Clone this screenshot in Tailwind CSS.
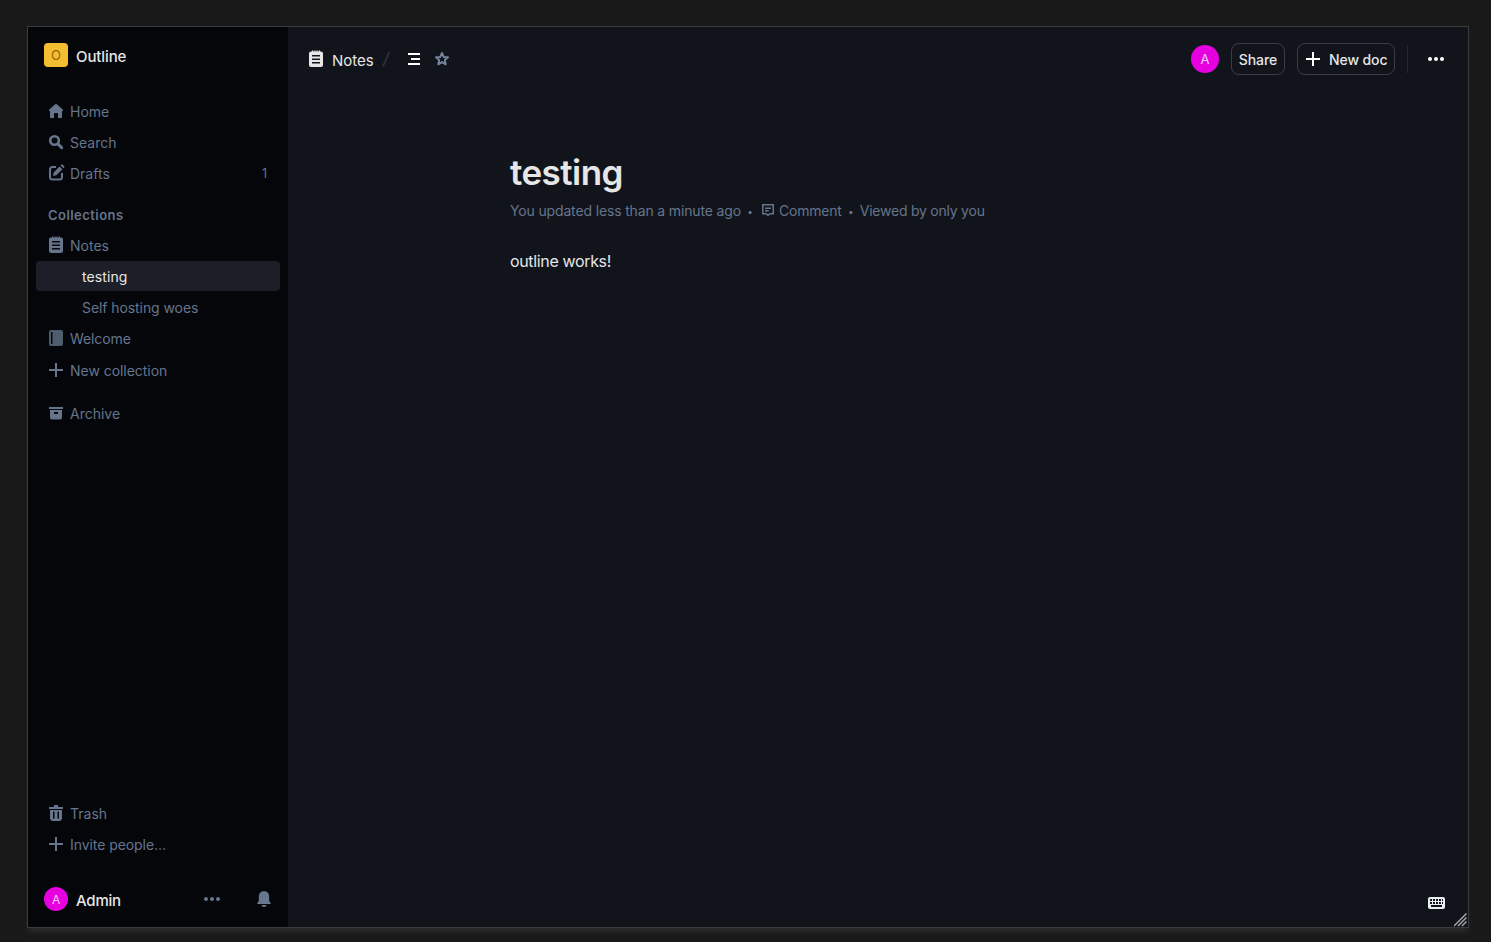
<!DOCTYPE html>
<html lang="en">
<head>
  <meta charset="UTF-8">
  <title>testing - Outline</title>
  <script src="https://cdn.jsdelivr.net/npm/@tailwindcss/browser@4"></script>
</head>
<body class="bg-[#19191a] h-screen overflow-hidden pl-[27px] pt-[26px] font-['Inter',sans-serif]">
  <div class="relative flex w-[1442px] h-[902px] border border-[#3a3b3d] bg-[#11141b] shadow-[0_5px_5px_-1px_#2a2a2b]">

    <!-- Sidebar -->
    <aside class="flex flex-col w-[260px] shrink-0 bg-[#04060a] text-[#66758c] text-[14px]">
      <div class="flex items-center gap-2 pl-4 pt-4 h-10 text-[#e6e6e6] text-[15px] tracking-[-0.1px] font-medium">
        <div class="size-6 rounded bg-[#f5be31] text-[#8d6a12] text-[13px] font-normal flex items-center justify-center pt-px">O</div>
        <span class="pt-1">Outline</span>
      </div>

      <nav class="flex flex-col gap-px px-2 mt-[29px]">
        <a class="flex items-center gap-0.5 h-[30px] px-2">
          <svg class="size-6" viewBox="0 0 24 24" fill="currentColor"><path d="M11.200 5.300a1.200 1.200 0 0 1 1.600 0l6 5.200c.6.600.3 1.500-.5 1.500H18v6a1 1 0 0 1-1 1h-3v-4a1 1 0 0 0-1-1h-2a1 1 0 0 0-1 1v4H7a1 1 0 0 1-1-1v-6h-.3c-.8 0-1.100-.9-.5-1.500z"/></svg>
          <span class="pt-px">Home</span>
        </a>
        <a class="flex items-center gap-0.5 h-[30px] px-2">
          <svg class="size-6" viewBox="0 0 24 24" fill="none" stroke="currentColor" stroke-linecap="round"><circle cx="10.500" cy="10.500" r="4.300" stroke-width="2.600"/><path d="M14.400 14.400l3.200 3.200" stroke-width="3"/></svg>
          <span class="pt-px">Search</span>
        </a>
        <a class="flex items-center gap-0.5 h-[30px] px-2">
          <svg class="size-6" viewBox="0 0 24 24" fill="currentColor"><path d="M12 6H8.500A2.500 2.500 0 0 0 6 8.500V16a2.500 2.500 0 0 0 2.500 2.500h7A2.500 2.500 0 0 0 18 16v-4" fill="none" stroke="currentColor" stroke-width="2"/><path d="M15.600 5.400l2.800 2.800-6 6-3.400.8.700-3.600zM16.600 4.400l.8-.8a.8.8 0 0 1 1.100 0l1.700 1.700a.8.8 0 0 1 0 1.100l-.8.8z"/></svg>
          <span class="pt-px">Drafts</span>
          <span class="ml-auto mr-[5px] pt-0.5 text-[12.5px]">1</span>
        </a>
      </nav>

      <div class="px-5 mt-[18px] h-[18px] leading-[19px] text-[13px] font-semibold tracking-[0.45px]">Collections</div>

      <nav class="flex flex-col gap-px px-2 mt-[6px]">
        <a class="flex items-center gap-0.5 h-[30px] px-2">
          <svg class="size-6" viewBox="0 0 24 24" fill="currentColor" fill-rule="evenodd"><path d="M7 4.500h1V3.500h1.300v1h1v-1h1.200v1h1v-1h1.200v1h1v-1H16v1h1a2 2 0 0 1 2 2V18a2 2 0 0 1-2 2H7a2 2 0 0 1-2-2V6.500a2 2 0 0 1 2-2zm1 3.500v1.500h8V8zm0 3.500V13h8v-1.500zM8 15v1.500h8V15z"/></svg>
          <span class="pt-px">Notes</span>
        </a>
        <a class="flex items-center h-[30px] pl-[46px] rounded bg-[#1c1e28] text-[#e6e6e6]"><span class="pt-px tracking-[0.1px]">testing</span></a>
        <a class="flex items-center h-[30px] pl-[46px]"><span class="pt-px tracking-[-0.08px]">Self hosting woes</span></a>
        <a class="flex items-center gap-0.5 h-[30px] px-2">
          <svg class="size-6 text-[#4e5c6e]" viewBox="0 0 24 24" fill="currentColor" fill-rule="evenodd"><path d="M7 4h10a2 2 0 0 1 2 2v12a2 2 0 0 1-2 2H7a2 2 0 0 1-2-2V6a2 2 0 0 1 2-2zm0 2v12h1.500V6z"/></svg>
          <span class="pt-px tracking-[-0.1px]">Welcome</span>
        </a>
        <a class="flex items-center gap-0.5 h-[30px] px-2 mt-px">
          <svg class="size-6" viewBox="0 0 24 24" fill="currentColor"><path d="M11 5h2v6h6v2h-6v6h-2v-6H5v-2h6z"/></svg>
          <span class="pt-px tracking-[-0.04px]">New collection</span>
        </a>
        <a class="flex items-center gap-0.5 h-[30px] px-2 mt-3">
          <svg class="size-6" viewBox="0 0 24 24" fill="currentColor" fill-rule="evenodd"><path d="M5 6h14v2H5zM6 9h12v7.500a2 2 0 0 1-2 2H8a2 2 0 0 1-2-2zm4 2v2h4v-2z"/></svg>
          <span class="pt-px">Archive</span>
        </a>
      </nav>

      <nav class="flex flex-col gap-px px-2 mt-auto">
        <a class="flex items-center gap-0.5 h-[30px] px-2">
          <svg class="size-6" viewBox="0 0 24 24" fill="currentColor" fill-rule="evenodd"><path d="M10 4h4v2h5v2H5V6h5zM6 9h12v8a3 3 0 0 1-3 3H9a3 3 0 0 1-3-3zm3 1.500v7h1.500v-7zm4.500 0v7H15v-7z"/></svg>
          <span class="pt-px">Trash</span>
        </a>
        <a class="flex items-center gap-0.5 h-[30px] px-2">
          <svg class="size-6" viewBox="0 0 24 24" fill="currentColor"><path d="M11 5h2v6h6v2h-6v6h-2v-6H5v-2h6z"/></svg>
          <span class="pt-px tracking-[-0.07px]">Invite people…</span>
        </a>
      </nav>

      <div class="flex items-center pl-4 pr-3 mt-6 mb-3 h-8 text-[#e6e6e6] text-[15px] tracking-[-0.2px] font-medium">
        <div class="size-6 rounded-full bg-[#e600e0] text-white/80 text-[12px] font-normal flex items-center justify-center pt-px">A</div>
        <span class="pl-2 pt-1">Admin</span>
        <svg class="size-6 ml-auto text-[#66778f]" viewBox="0 0 24 24" fill="currentColor"><circle cx="6" cy="12" r="2"/><circle cx="12" cy="12" r="2"/><circle cx="18" cy="12" r="2"/></svg>
        <svg class="size-6 ml-7 text-[#66778f]" viewBox="0 0 24 24" fill="currentColor"><path d="M12 4a5.200 5.200 0 0 1 5.200 5.200V14l1.600 2.200c.3.500.1.800-.4.800H5.600c-.5 0-.7-.3-.4-.8L6.800 14V9.200A5.200 5.200 0 0 1 12 4zM9.500 18h5a2.500 2 0 0 1-5 0z"/></svg>
      </div>
    </aside>

    <!-- Document -->
    <main class="flex-1 min-w-0">
      <header class="flex items-center h-16 pl-4 pr-5 text-[14px] font-medium text-[#e6e6e6]">
        <svg class="size-6" viewBox="0 0 24 24" fill="currentColor" fill-rule="evenodd"><path d="M7 4.500h1V3.500h1.300v1h1v-1h1.200v1h1v-1h1.200v1h1v-1H16v1h1a2 2 0 0 1 2 2V18a2 2 0 0 1-2 2H7a2 2 0 0 1-2-2V6.500a2 2 0 0 1 2-2zm1 3.500v1.500h8V8zm0 3.500V13h8v-1.500zM8 15v1.500h8V15z"/></svg>
        <span class="pl-1 pt-1 text-[15px] font-normal">Notes</span>
        <svg class="size-6 text-[#2d3138]" viewBox="0 0 24 24" fill="none" stroke="currentColor" stroke-width="1.800"><path d="M9 19.500L15.500 4.500"/></svg>
        <svg class="size-6 ml-1 text-white" viewBox="0 0 24 24" fill="currentColor"><path d="M6 6h12v2H6zM9 11h9v2H9zM6 16h12v2H6z"/></svg>
        <svg class="size-6 ml-1 text-[#75849b]" viewBox="0 0 24 24" fill="none" stroke="currentColor" stroke-width="2" stroke-linejoin="round"><path d="M12 6l1.700 3.900 4.300.4-3.200 2.800.9 4.200L12 15.100l-3.700 2.200.9-4.200L6 10.300l4.300-.4z"/></svg>

        <div class="ml-auto size-7 rounded-full bg-[#e600e0] text-white/80 text-[13px] font-normal flex items-center justify-center pt-0.5">A</div>
        <button class="ml-3 h-8 w-[54px] rounded-lg border border-[#3a3d42] pt-px tracking-[-0.1px]">Share</button>
        <button class="ml-3 h-8 w-[98px] rounded-lg border border-[#3a3d42] flex items-center pl-[3px]">
          <svg class="size-6 text-white" viewBox="0 0 24 24" fill="currentColor"><path d="M11 5h2v6h6v2h-6v6h-2v-6H5v-2h6z"/></svg>
          <span class="pl-1 pt-px whitespace-nowrap tracking-[-0.1px]">New doc</span>
        </button>
        <div class="ml-3 w-px h-7 bg-[#24282f]"></div>
        <svg class="size-6 ml-4 text-white" viewBox="0 0 24 24" fill="currentColor"><circle cx="6" cy="12" r="2"/><circle cx="12" cy="12" r="2"/><circle cx="18" cy="12" r="2"/></svg>
      </header>

      <article class="pl-[222px] pt-[59px]">
        <h1 class="text-[35px] leading-[45px] tracking-[-0.55px] font-semibold text-[#e6e6e6]">testing</h1>
        <div class="flex items-center mt-[5px] h-5 text-[14px] tracking-[-0.15px] text-[#66758c] whitespace-nowrap">
          <span>You updated less than a minute ago</span>
          <span class="w-[18px] pt-0.5 text-center text-[10px]">•</span>
          <svg class="size-[18px]" viewBox="0 0 24 24" fill="none" stroke="currentColor" stroke-width="2"><path d="M5 5h14v12h-4.500L12 19l-2.500-2H5zM8 9.500h8M8 13h5"/></svg>
          <span class="pl-0.5 tracking-[-0.2px]">Comment</span>
          <span class="w-[18px] pt-0.5 text-center text-[10px]">•</span>
          <span class="tracking-[-0.23px]">Viewed by only you</span>
        </div>
        <p class="mt-[27px] text-[16px] leading-[28px] tracking-[-0.35px] text-[#e6e6e6]">outline works!</p>
      </article>
    </main>

    <!-- Keyboard shortcuts -->
    <svg class="absolute right-[19px] bottom-3 size-6 text-[#e8eef2]" viewBox="0 0 24 24" fill="currentColor" fill-rule="evenodd"><path d="M5 6h13a2 2 0 0 1 2 2v8a2 2 0 0 1-2 2H5a2 2 0 0 1-2-2V8a2 2 0 0 1 2-2zM5 8v2h2V8zm3 0v2h2V8zm3 0v2h2V8zm3 0v2h2V8zm3 0v2h1V8zM5 11v2h2v-2zm3 0v2h2v-2zm3 0v2h2v-2zm3 0v2h2v-2zm3 0v2h1v-2zM6 14v2h11v-2z"/></svg>
    <!-- Resize grip -->
    <svg class="absolute right-0 bottom-0 w-[14px] h-[14px] text-[#a0a3a8]" viewBox="0 0 14 14" fill="none" stroke="currentColor" stroke-width="1.500"><path d="M0 13L12.500 .5M4 13l8.500-8.500M8 13l4.500-4.500"/></svg>
  </div>
</body>
</html>
